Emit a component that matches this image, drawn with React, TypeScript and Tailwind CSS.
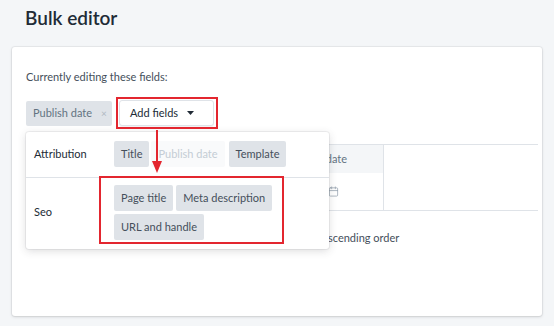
import { Calendar } from 'lucide-react'

const chip = 'flex h-[26px] items-center rounded-[2px] bg-[#dfe3e8] px-[7px] text-[11px] text-[#454f5b]'

function Caret() {
  return (
    <svg width="7" height="4" viewBox="0 0 7 4" className="shrink-0">
      <path d="M0 0h7L3.5 4z" fill="#212b36" />
    </svg>
  )
}

export default function App() {
  return (
    <div className="h-[326px] w-[554px] overflow-hidden bg-[#f4f6f8] px-3 pt-1 font-['Lato',sans-serif]">
      <h1 className="pl-[13px] text-[19px] font-semibold leading-[28px] text-[#212b36]">Bulk editor</h1>

      <div className="relative mt-[15px] h-[269px] rounded-[3px] bg-white pl-[14px] pr-1 pt-[22px] shadow-[0_0_0_1px_rgba(63,63,68,0.06),0_1px_3px_0_rgba(63,63,68,0.18)]">
        <p className="text-[11px] leading-4 text-[#454f5b]">Currently editing these fields:</p>

        {/* selected fields */}
        <div className="mt-[15px] flex h-[26px] items-center gap-[7px]">
          <span className="flex h-[25px] w-[86px] items-center gap-[9px] rounded-[2px] bg-[#dfe3e8] pl-[7px] text-[11px] text-[#637381]">
            Publish date <span className="text-[10px] text-[#b0b9c2]">×</span>
          </span>
          <button className="flex h-[26px] w-[95px] items-center justify-start gap-[9px] rounded-[3px] border border-[#dfe3e8] bg-white pl-[10px] text-[11px] text-[#212b36] shadow-[0_1px_0_rgba(22,29,37,0.05)]">
            <span>Add fields</span>
            <Caret />
          </button>
        </div>

        {/* table behind the menu */}
        <div className="mt-[18px] w-[512px] border-y border-[#dfe3e8]">
          <div className="w-[358px] border-r border-[#dfe3e8]">
            <div className="grid h-[28px] grid-cols-[250px_108px] items-center bg-[#f4f6f8] text-[11px] text-[#637381]">
              <span />
              <span className="pl-[12px]">Publish date</span>
            </div>
            <div className="grid h-[37px] grid-cols-[250px_108px] items-center">
              <span />
              <Calendar className="ml-[52px] h-[11px] w-[11px] text-[#919eab]" strokeWidth={1.6} />
            </div>
          </div>
        </div>
        <div className="mt-[19px] flex items-center gap-2 pl-[242px] text-[11px] text-[#454f5b]">
          <span className="h-[12px] w-[12px] rounded-[2px] border border-[#eef0f2]" />
          <span>Sort in ascending order</span>
        </div>

        {/* add fields menu */}
        <div className="absolute left-[14px] top-[85px] w-[303px] rounded-[3px] bg-white text-[11px] text-[#212b36] shadow-[0_0_0_1px_rgba(63,63,68,0.07),0_2px_8px_rgba(63,63,68,0.18)]">
          <div className="flex items-center border-b border-[#dfe3e8] pb-[10px] pl-2 pt-[9px]">
            <span className="w-[80px] shrink-0">Attribution</span>
            <div className="flex gap-[2px]">
              <span className={chip}>Title</span>
              <span className="flex h-[26px] items-center rounded-[2px] bg-[#f9fafb] px-[7px] text-[11px] text-[#c4cdd5]">
                Publish date
              </span>
              <span className={chip + ' ml-[2px]'}>Template</span>
            </div>
          </div>
          <div className="flex items-center pb-[9px] pl-2 pt-[7px]">
            <span className="w-[80px] shrink-0">Seo</span>
            <div className="flex w-[168px] flex-wrap gap-[3px]">
              <span className={chip}>Page title</span>
              <span className={chip}>Meta description</span>
              <span className={chip}>URL and handle</span>
            </div>
          </div>
        </div>

        {/* annotations */}
        <div className="absolute left-[104px] top-[50px] h-[32px] w-[102px] border-2 border-[#e3262f]" />
        <div className="absolute left-[87px] top-[129px] h-[68px] w-[185px] border-2 border-[#e3262f]" />
        <svg className="absolute left-[140px] top-[83px]" width="10" height="43" viewBox="0 0 10 43">
          <path d="M5 0v32" stroke="#e3262f" strokeWidth="2" />
          <path d="M0 31h10l-5 12z" fill="#e3262f" />
        </svg>
      </div>
    </div>
  )
}
